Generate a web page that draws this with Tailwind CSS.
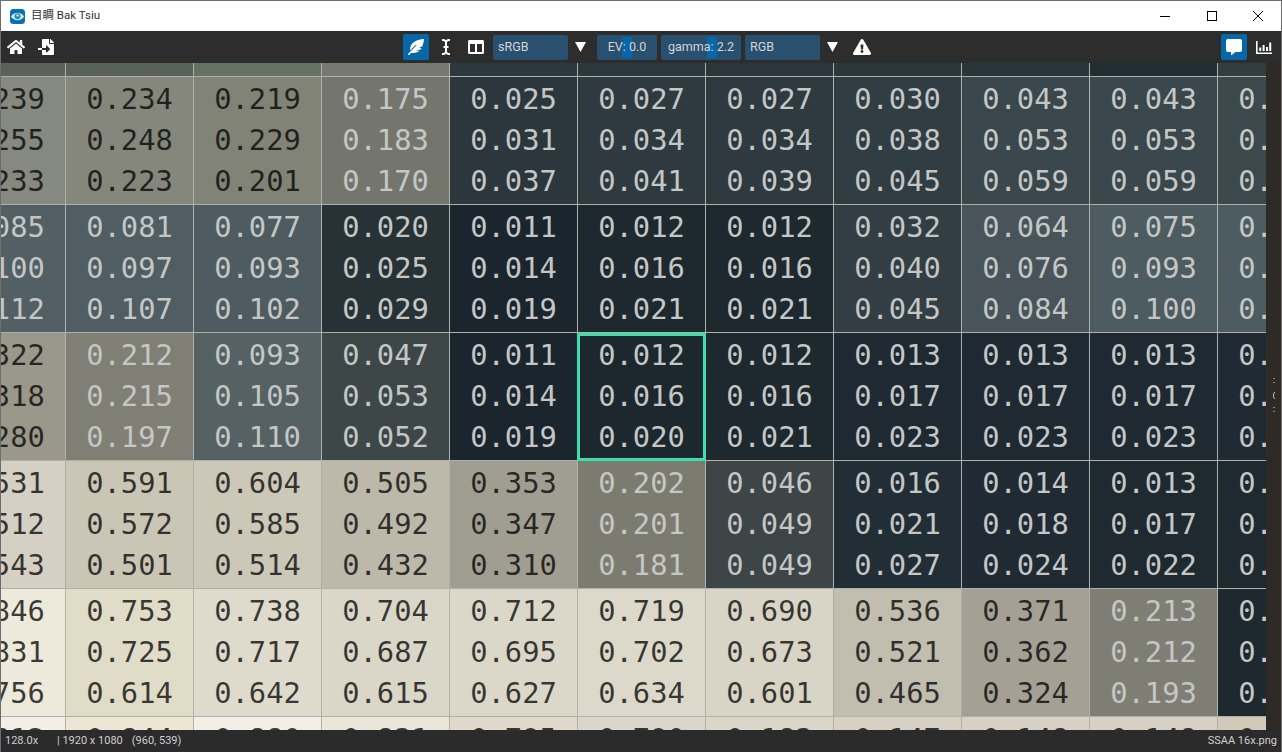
<!DOCTYPE html>
<html lang="zh-Hant">
<head>
  <meta charset="UTF-8">
  <meta name="viewport" content="width=device-width, initial-scale=1.0">
  <title>目睭 Bak Tsiu</title>
  <script src="https://cdn.jsdelivr.net/npm/@tailwindcss/browser@4"></script>
</head>
<body class="bg-[#2d2d2d] overflow-hidden">
<div class="w-[1282px] h-[752px] flex flex-col border-x border-t border-[#6e6e6e] font-['Roboto','Noto_Sans_CJK_TC',sans-serif]">

  <!-- title bar -->
  <div class="h-[30px] shrink-0 bg-white flex items-center text-black">
    <svg class="ml-[9px] w-[15px] h-[15px]" viewBox="0 0 15 15">
      <rect width="15" height="15" rx="3.5" fill="#0b6fb3"/>
      <path d="M1 7.5 C4 2.5 11 2.5 14 7.5 C11 12.5 4 12.5 1 7.5Z" fill="#d8f0f8"/>
      <circle cx="7.5" cy="7.2" r="3" fill="#1b8fc4"/>
      <circle cx="7.5" cy="6.5" r="1.1" fill="#ffffff"/>
    </svg>
    <span class="ml-[6px] text-[11.5px] text-[#333]">目睭 Bak Tsiu</span>
    <div class="ml-auto flex items-center">
      <svg class="w-[46px] h-[30px]" viewBox="0 0 46 30"><path d="M17 15.5h10" stroke="#000" stroke-width="1"/></svg>
      <svg class="w-[46px] h-[30px]" viewBox="0 0 46 30"><rect x="18.5" y="10.5" width="9" height="9" fill="none" stroke="#000"/></svg>
      <svg class="w-[46px] h-[30px]" viewBox="0 0 46 30"><path d="M18 10l10 10M28 10l-10 10" stroke="#000" stroke-width="1"/></svg>
    </div>
  </div>

  <!-- toolbar -->
  <div class="h-[32px] shrink-0 bg-[#2d2d2d] flex items-center text-[12.5px] text-[#d4d4d4]">
    <div class="w-[402px] flex items-center pl-[6px] gap-[13px]">
      <svg class="w-[18px] h-[16px]" viewBox="0 0 576 512" fill="#fff"><path d="M280.37 148.26L96 300.11V464a16 16 0 0 0 16 16l112.06-.29a16 16 0 0 0 15.92-16V368a16 16 0 0 1 16-16h64a16 16 0 0 1 16 16v95.64a16 16 0 0 0 16 16.05L464 480a16 16 0 0 0 16-16V300L295.67 148.26a12.19 12.19 0 0 0-15.3 0zM571.6 251.47L488 182.56V44.05a12 12 0 0 0-12-12h-56a12 12 0 0 0-12 12v72.61L318.47 43a48 48 0 0 0-61 0L4.34 251.47a12 12 0 0 0-1.6 16.9l25.5 31A12 12 0 0 0 45.15 301l235.22-193.74a12.19 12.19 0 0 1 15.3 0L530.9 301a12 12 0 0 0 16.9-1.6l25.5-31a12 12 0 0 0-1.7-16.93z"/></svg>
      <svg class="w-[16px] h-[16px]" viewBox="0 0 512 512" fill="#fff"><path d="M16 288c-8.8 0-16 7.2-16 16v32c0 8.8 7.2 16 16 16h112v-64zm489-183L407.1 7c-4.5-4.5-10.6-7-17-7H384v128h128v-6.1c0-6.3-2.5-12.4-7-16.9zm-153 31V0H152c-13.3 0-24 10.7-24 24v264h128v-65.2c0-14.3 17.3-21.4 27.4-11.3L379 308c6.6 6.7 6.6 17.4 0 24l-95.7 96.4c-10.1 10.1-27.4 3-27.4-11.3V352H128v136c0 13.3 10.7 24 24 24h336c13.3 0 24-10.7 24-24V160H376c-13.2 0-24-10.8-24-24z"/></svg>
    </div>
    <div class="w-[26px] h-[26px] rounded-[2px] bg-[#0668a8] flex items-center justify-center">
      <svg class="w-[16px] h-[16px]" viewBox="0 0 512 512" fill="#fff"><path d="M512 0C460.22 3.56 96.44 38.2 71.01 287.61c-3.09 26.66-4.84 53.44-5.99 80.24l178.87-178.69c6.25-6.25 16.4-6.25 22.65 0s6.25 16.38 0 22.63L7.04 471.03c-9.38 9.37-9.38 24.57 0 33.94 9.38 9.37 24.59 9.37 33.98 0l57.13-57.07c42.09-.14 84.15-2.53 125.96-7.36 53.48-5.44 97.02-26.47 132.58-56.54H255.74l146.79-48.88c11.25-14.89 21.37-30.71 30.45-47.12h-81.14l106.54-53.21C500.29 132.86 510.19 26.26 512 0z"/></svg>
    </div>
    <svg class="ml-[13px] w-[8px] h-[16px]" viewBox="0 0 256 512" fill="#fff"><path d="M256 52.048V12.065C256 5.496 250.726.148 244.158.066 211.621-.344 166.469.011 128 37.959 90.266.736 46.979-.114 11.913.114 5.318.157 0 5.519 0 12.114v39.645c0 6.687 5.458 12.078 12.145 11.998C38.111 63.447 96 67.243 96 112.182V224H60c-6.627 0-12 5.373-12 12v40c0 6.627 5.373 12 12 12h36v112c0 44.932-56.075 48.031-83.95 47.959C5.404 447.942 0 453.306 0 459.952v39.983c0 6.569 5.274 11.917 11.842 11.999 32.537.409 77.689.054 116.158-37.894 37.734 37.223 81.021 38.073 116.087 37.845 6.595-.043 11.913-5.405 11.913-12V460.24c0-6.687-5.458-12.078-12.145-11.998C217.889 448.553 160 444.939 160 400V288h36c6.627 0 12-5.373 12-12v-40c0-6.627-5.373-12-12-12h-36V112.182c0-44.932 56.075-48.213 83.95-48.142 6.646.018 12.05-5.346 12.05-11.992z"/></svg>
    <svg class="ml-[18px] w-[16px] h-[16px]" viewBox="0 0 512 512" fill="#fff"><path d="M464 32H48C21.49 32 0 53.49 0 80v352c0 26.51 21.49 48 48 48h416c26.51 0 48-21.49 48-48V80c0-26.51-21.49-48-48-48zM224 416H64V160h160v256zm224 0H288V160h160v256z"/></svg>

    <div class="ml-[9px] w-[75px] h-[25px] rounded-[2px] bg-[#2a5070] flex items-center pl-[5px]">sRGB</div>
    <svg class="ml-[7px] w-[11px] h-[10px]" viewBox="0 0 11 10" fill="#fff"><path d="M0 0h11L5.5 10z"/></svg>

    <div class="relative ml-[11px] w-[60px] h-[25px] rounded-[2px] bg-[#2a5070] flex items-center justify-center">
      <div class="absolute left-[25px] inset-y-[2px] w-[10px] rounded-[1px] bg-[#0668a8]"></div>
      <span class="relative">EV: 0.0</span>
    </div>
    <div class="relative ml-[4px] w-[80px] h-[25px] rounded-[2px] bg-[#2a5070] flex items-center justify-center">
      <div class="absolute left-[46px] inset-y-[2px] w-[10px] rounded-[1px] bg-[#0668a8]"></div>
      <span class="relative">gamma: 2.2</span>
    </div>
    <div class="ml-[4px] w-[75px] h-[25px] rounded-[2px] bg-[#2a5070] flex items-center pl-[5px]">RGB</div>
    <svg class="ml-[7px] w-[11px] h-[10px]" viewBox="0 0 11 10" fill="#fff"><path d="M0 0h11L5.5 10z"/></svg>
    <svg class="ml-[15px] w-[18px] h-[16px]" viewBox="0 0 576 512" fill="#fff"><path d="M569.517 440.013C587.975 472.007 564.806 512 527.94 512H48.054c-36.937 0-59.999-40.055-41.577-71.987L246.423 23.985c18.467-32.009 64.72-31.951 83.154 0l239.94 416.028zM288 354c-25.405 0-46 20.595-46 46s20.595 46 46 46 46-20.595 46-46-20.595-46-46-46zm-43.673-165.346l7.418 136c.347 6.364 5.609 11.346 11.982 11.346h48.546c6.373 0 11.635-4.982 11.982-11.346l7.418-136c.375-6.874-5.098-12.654-11.982-12.654h-63.383c-6.884 0-12.356 5.78-11.981 12.654z"/></svg>

    <div class="ml-auto flex items-center pr-[9px]">
      <div class="w-[26px] h-[26px] rounded-[2px] bg-[#0668a8] flex items-center justify-center">
        <svg class="w-[16px] h-[16px]" viewBox="0 0 512 512" fill="#fff"><path d="M448 0H64C28.7 0 0 28.7 0 64v288c0 35.3 28.7 64 64 64h96v84c0 9.8 11.2 15.5 19.1 9.7L304 416h144c35.3 0 64-28.7 64-64V64c0-35.3-28.7-64-64-64z"/></svg>
      </div>
      <svg class="ml-[9px] w-[16px] h-[13px]" viewBox="0 0 16 13" fill="#fff"><path d="M0 0h1.6v11.4H16V13H0zM3.2 6.5h2v3.6h-2zM6.6 4h2v6.1h-2zM10 6h2v4.1h-2zM13.2 1.5h2v8.6h-2z"/></svg>
    </div>
  </div>

  <!-- viewer -->
  <div class="flex-1 min-h-0 flex">
    <div class="w-[1265px] shrink-0 overflow-hidden">
      <div id="pixels" class="grid grid-cols-[repeat(11,128px)] auto-rows-[128px] w-max -ml-[63px] -mt-[114px] font-['DejaVu_Sans_Mono',monospace] text-[28.8px] leading-[41px]"></div>
    </div>
    <div class="flex-1 flex items-center justify-center bg-[#2d2a28]">
      <svg class="w-[4px] h-[36px] -mt-[4px]" viewBox="0 0 4 36" fill="none" stroke="#ddd" stroke-width="1"><path d="M2 1v1M2 5v1M3 15c-2 1-2 6 0 7M2 30v1M2 34v1"/></svg>
    </div>
  </div>

  <!-- status bar -->
  <div class="h-[22px] shrink-0 bg-[#2b2b2b] flex items-center text-[11px] text-[#cfcfcf]">
    <span class="ml-[4px] w-[52px]">128.0x</span>
    <span>| 1920 x 1080</span>
    <span class="ml-[9px]">(960, 539)</span>
    <span class="ml-auto mr-[4px]">SSAA 16x.png</span>
  </div>
</div>

<script>
  // rows of [r, g, b], columns left to right. top/bottom rows are mostly hidden so they carry a bg
  const rows = [
    { bg: ["#5c6259","#5a6258","#677064","#767970","#2b383e","#2b383e","#2b363c","#2c373c","#2a343b","#212c33","#333d40"],
      cells: Array(11).fill(["0.100","0.100","0.100"]) },
    { cells: [
      ["0.239","0.255","0.233"],["0.234","0.248","0.223"],["0.219","0.229","0.201"],["0.175","0.183","0.170"],
      ["0.025","0.031","0.037"],["0.027","0.034","0.041"],["0.027","0.034","0.039"],["0.030","0.038","0.045"],
      ["0.043","0.053","0.059"],["0.043","0.053","0.059"],["0.044","0.054","0.060"]] },
    { cells: [
      ["0.085","0.100","0.112"],["0.081","0.097","0.107"],["0.077","0.093","0.102"],["0.020","0.025","0.029"],
      ["0.011","0.014","0.019"],["0.012","0.016","0.021"],["0.012","0.016","0.021"],["0.032","0.040","0.045"],
      ["0.064","0.076","0.084"],["0.075","0.093","0.100"],["0.075","0.093","0.100"]] },
    { cells: [
      ["0.322","0.318","0.280"],["0.212","0.215","0.197"],["0.093","0.105","0.110"],["0.047","0.053","0.052"],
      ["0.011","0.014","0.019"],["0.012","0.016","0.020"],["0.012","0.016","0.021"],["0.013","0.017","0.023"],
      ["0.013","0.017","0.023"],["0.013","0.017","0.023"],["0.014","0.018","0.024"]] },
    { cells: [
      ["0.531","0.512","0.543"],["0.591","0.572","0.501"],["0.604","0.585","0.514"],["0.505","0.492","0.432"],
      ["0.353","0.347","0.310"],["0.202","0.201","0.181"],["0.046","0.049","0.049"],["0.016","0.021","0.027"],
      ["0.014","0.018","0.024"],["0.013","0.017","0.022"],["0.013","0.017","0.022"]],
      over: { 0: "#d6d0c4" } },
    { cells: [
      ["0.846","0.831","0.756"],["0.753","0.725","0.614"],["0.738","0.717","0.642"],["0.704","0.687","0.615"],
      ["0.712","0.695","0.627"],["0.719","0.702","0.634"],["0.690","0.673","0.601"],["0.536","0.521","0.465"],
      ["0.371","0.362","0.324"],["0.213","0.212","0.193"],["0.012","0.016","0.021"]] },
    { bg: ["#f3efe6","#ede6d5","#f3efe6","#ebe6da","#dfd8cb","#dbd6cb","#dad6ca","#d6d1c4","#d6d1c4","#d6d1c4","#d1cab8"],
      cells: [
      ["0.812","0.800","0.750"],["0.844","0.800","0.700"],["0.880","0.800","0.750"],["0.831","0.800","0.750"],
      ["0.795","0.700","0.650"],["0.790","0.700","0.650"],["0.183","0.700","0.650"],["0.147","0.600","0.600"],
      ["0.148","0.600","0.600"],["0.148","0.600","0.600"],["0.100","0.600","0.500"]] }
  ];

  const toSrgb = v => Math.round(255 * (v <= 0.0031308 ? 12.92 * v : 1.055 * Math.pow(v, 1 / 2.4) - 0.055));

  // the picture's dark pixels lean teal and its bright ones warm, a bit more than the numbers say
  function cellColor(nums) {
    const rgb = nums.map(toSrgb);
    const tint = nums[2] > nums[0] && nums[1] < 0.15 ? [0, 6, 7] : [0, -1, -6];
    return `rgb(${rgb.map((c, i) => c + tint[i]).join(",")})`;
  }

  const grid = document.getElementById("pixels");

  rows.forEach((row, y) => {
    row.cells.forEach((vals, x) => {
      const div = document.createElement("div");
      const nums = vals.map(Number);
      const mean = (nums[0] + nums[1] + nums[2]) / 3;
      div.className = "relative flex flex-col items-center justify-center border-r border-b border-[#b0b0aa] " +
        (mean < 0.21 ? "text-[#c4c7c6]" : "text-black/75");
      div.style.backgroundColor = row.bg ? row.bg[x] : (row.over && row.over[x]) || cellColor(nums);
      div.innerHTML = vals.map(v => `<span>${v}</span>`).join("");
      if (y === 3 && x === 5) {
        const mark = document.createElement("div");
        mark.className = "absolute z-10 -left-[1px] -right-[1px] top-0 -bottom-[1px] border-[3px] border-[#3ce0ac]";
        div.appendChild(mark);
      }
      grid.appendChild(div);
    });
  });
</script>
</body>
</html>
